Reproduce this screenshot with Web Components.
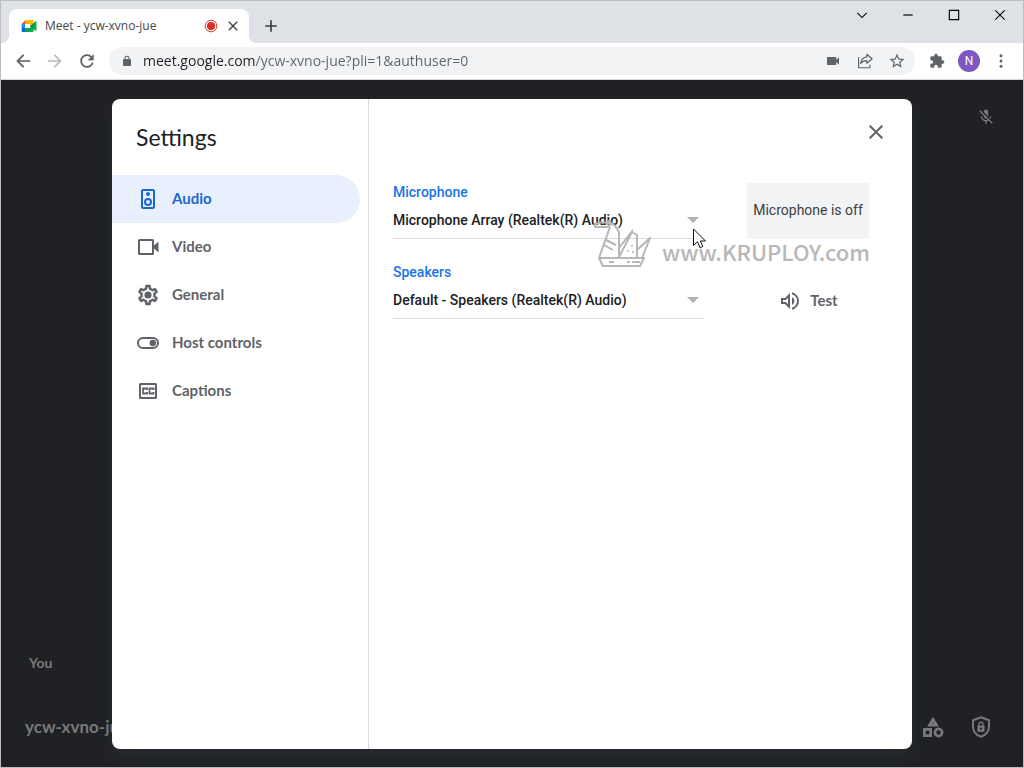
<!DOCTYPE html>
<html lang="en">
<head>
<meta charset="utf-8">
<title>Meet - ycw-xvno-jue</title>
<style>
    html, body {
        height: 100%;
        margin: 0;
    }
    body {
        font-family: Roboto, "Liberation Sans", sans-serif;
        font-size: 14px;
        color: #202124;
        --ui-font: "Open Sans", "Noto Sans", sans-serif;
        --brand-font: Lato, "Liberation Sans", sans-serif;
        --gray-700: #5f6368;
        --blue-600: #1a73e8;
        --stage: #202124;
    }
</style>
</head>
<body>
<browser-window>
    <browser-tab slot="tabs">Meet - ycw-xvno-jue</browser-tab>
    <browser-toolbar slot="toolbar" url="meet.google.com/ycw-xvno-jue?pli=1&amp;authuser=0"></browser-toolbar>
    <meet-stage name="You" code="ycw-xvno-jue">
        <settings-dialog heading="Settings">
            <settings-item slot="nav" icon="speaker" selected>Audio</settings-item>
            <settings-item slot="nav" icon="video">Video</settings-item>
            <settings-item slot="nav" icon="gear">General</settings-item>
            <settings-item slot="nav" icon="toggle">Host controls</settings-item>
            <settings-item slot="nav" icon="captions">Captions</settings-item>

            <device-row label="Microphone" value="Microphone Array (Realtek(R) Audio)">
                <mic-status>Microphone is off</mic-status>
            </device-row>
            <device-row label="Speakers" value="Default - Speakers (Realtek(R) Audio)">
                <test-button>Test</test-button>
            </device-row>
        </settings-dialog>
    </meet-stage>
</browser-window>
<site-watermark>www.KRUPLOY.com</site-watermark>
<mouse-pointer></mouse-pointer>

<script>
    // Icons are drawn on a 24 unit grid and filled with the current colour
    const ICONS = {
        back: '<path d="M20.500 11H7.800l5.600-5.600L12 4l-8 8 8 8 1.400-1.400L7.800 13h12.700z" stroke="currentColor" stroke-width=".2"/>',
        forward: '<path d="M3.500 11h12.700l-5.600-5.600L12 4l8 8-8 8-1.400-1.400 5.600-5.600H3.500z" stroke="currentColor" stroke-width=".2"/>',
        reload: '<path d="M17.650 6.350C16.200 4.900 14.210 4 12 4c-4.420 0-7.990 3.580-7.990 8s3.570 8 7.990 8c3.730 0 6.840-2.550 7.730-6h-2.080c-.82 2.330-3.040 4-5.650 4-3.310 0-6-2.690-6-6s2.690-6 6-6c1.660 0 3.140.69 4.220 1.780L13 11h7V4l-2.350 2.350z" stroke="currentColor" stroke-width=".2"/>',
        lock: '<path d="M18 8h-1V6.500a5 5 0 0 0-10 0V8H6a2 2 0 0 0-2 2v10a2 2 0 0 0 2 2h12a2 2 0 0 0 2-2V10a2 2 0 0 0-2-2zM9 8V6.500a3 3 0 0 1 6 0V8z"/>',
        camera: '<path d="M17 10.500V7a1 1 0 0 0-1-1H4a1 1 0 0 0-1 1v10a1 1 0 0 0 1 1h12a1 1 0 0 0 1-1v-3.500l4 4v-11z"/>',
        share: '<g fill="none" stroke="currentColor" stroke-width="1.600"><path d="M3.500 7v14h15v-4" stroke-linejoin="round"/><path d="M14.500 3l7 6-7 6v-3.500c-3.700 0-6.300 1-8.300 3.700.7-4.700 3.500-8.200 8.300-8.700z" stroke-linejoin="round"/></g>',
        star: '<path d="M22 9.240l-7.190-.62L12 2 9.190 8.630 2 9.240l5.460 4.730L5.820 21 12 17.270 18.180 21l-1.630-7.030L22 9.240zM12 15.400l-3.760 2.270 1-4.280-3.320-2.880 4.380-.38L12 6.100l1.710 4.040 4.380.38-3.320 2.880 1 4.280L12 15.400z"/>',
        puzzle: '<path d="M20.500 11H19V7c0-1.100-.9-2-2-2h-4V3.500C13 2.120 11.880 1 10.500 1S8 2.120 8 3.500V5H4c-1.100 0-1.990.9-1.990 2v3.800H3.500c1.490 0 2.700 1.210 2.700 2.700s-1.210 2.700-2.700 2.700H2V20c0 1.100.9 2 2 2h3.800v-1.500c0-1.490 1.210-2.700 2.700-2.700 1.490 0 2.700 1.210 2.700 2.700V22H17c1.100 0 2-.9 2-2v-4h1.500c1.380 0 2.500-1.120 2.500-2.500S21.880 11 20.500 11z"/>',
        dots: '<circle cx="12" cy="5" r="2"/><circle cx="12" cy="12" r="2"/><circle cx="12" cy="19" r="2"/>',
        cross: '<path d="M19 6.410L17.590 5 12 10.590 6.410 5 5 6.410 10.590 12 5 17.590 6.410 19 12 13.410 17.590 19 19 17.590 13.410 12z"/>',
        plus: '<path d="M19 11h-6V5h-2v6H5v2h6v6h2v-6h6z"/>',
        record: '<circle cx="12" cy="12" r="7"/><circle cx="12" cy="12" r="10" fill="none" stroke="currentColor" stroke-width="1.600"/>',
        meet: '<path fill="#ea4335" d="M1 9l6-6v6z"/><path fill="#2684fc" d="M1 9h5v6H1z"/><path fill="#0066da" d="M1 15h5v6H3a2 2 0 0 1-2-2z"/><path fill="#ffba00" d="M7 3h10a2 2 0 0 1 2 2v5l-5 3V9H6z"/><path fill="#00ac47" d="M6 15h8v-3l5-4v11a2 2 0 0 1-2 2H6z"/><path fill="#00832d" d="M14 12l5-4v8z"/><path fill="#00ac47" d="M18 8.500l4-3.500c.5-.4 1.200-.1 1.200.6v13c0 .7-.7 1-1.200.6l-4-3.500z"/>',
        chevron: '<path d="M4 8.500l8 8 8-8" fill="none" stroke="currentColor" stroke-width="1.800"/>',
        minimise: '<path d="M4 11h16v2H4z"/>',
        maximise: '<path d="M5 5h14v14H5z" fill="none" stroke="currentColor" stroke-width="1.700"/>',
        shut: '<path d="M4 4l16 16M20 4L4 20" fill="none" stroke="currentColor" stroke-width="1.800"/>',
        speaker: '<path fill-rule="evenodd" d="M17 2H7a2 2 0 0 0-2 2v16a2 2 0 0 0 2 2h10a2 2 0 0 0 2-2V4a2 2 0 0 0-2-2zm0 18H7V4h10z"/><circle cx="12" cy="7" r="2"/><circle cx="12" cy="15" r="3" fill="none" stroke="currentColor" stroke-width="2"/>',
        video: '<path fill-rule="evenodd" d="M18 10.500V5.500A1.500 1.500 0 0 0 16.500 4h-13A1.500 1.500 0 0 0 2 5.500v13A1.500 1.500 0 0 0 3.500 20h13a1.500 1.500 0 0 0 1.500-1.500v-5l4.500 4v-11zM16 18H4V6h12z"/>',
        gear: '<path stroke="currentColor" stroke-width=".5" d="M19.430 12.980c.04-.32.07-.64.07-.98 0-.34-.03-.66-.07-.98l2.110-1.650c.19-.15.24-.42.12-.64l-2-3.460c-.09-.16-.26-.25-.44-.25-.06 0-.12.01-.17.03l-2.490 1c-.52-.4-1.080-.73-1.690-.98l-.38-2.650C14.460 2.180 14.250 2 14 2h-4c-.25 0-.46.18-.49.42l-.38 2.650c-.61.25-1.170.59-1.690.98l-2.490-1c-.06-.02-.12-.03-.18-.03-.17 0-.34.09-.43.25l-2 3.460c-.13.22-.07.49.12.64l2.110 1.650c-.04.32-.07.65-.07.98 0 .33.03.66.07.98l-2.110 1.650c-.19.15-.24.42-.12.64l2 3.460c.09.16.26.25.44.25.06 0 .12-.01.17-.03l2.490-1c.52.4 1.080.73 1.690.98l.38 2.650c.03.24.24.42.49.42h4c.25 0 .46-.18.49-.42l.38-2.650c.61-.25 1.170-.59 1.690-.98l2.490 1c.06.02.12.03.18.03.17 0 .34-.09.43-.25l2-3.460c.12-.22.07-.49-.12-.64l-2.110-1.650zm-1.980-1.710c.04.31.05.52.05.73 0 .21-.02.43-.05.73l-.14 1.130.89.7 1.080.84-.7 1.210-1.270-.51-1.040-.42-.9.68c-.43.32-.84.56-1.250.73l-1.060.43-.16 1.130-.2 1.350h-1.400l-.19-1.350-.16-1.130-1.060-.43c-.43-.18-.83-.41-1.230-.71l-.91-.7-1.060.43-1.270.51-.7-1.210 1.080-.84.89-.7-.14-1.130c-.03-.31-.05-.54-.05-.74s.02-.43.05-.73l.14-1.130-.89-.7-1.080-.84.7-1.210 1.270.51 1.040.42.9-.68c.43-.32.84-.56 1.250-.73l1.060-.43.16-1.130.2-1.350h1.390l.19 1.350.16 1.130 1.060.43c.43.18.83.41 1.230.71l.91.7 1.060-.43 1.270-.51.7 1.210-1.070.85-.89.7.14 1.130z"/><circle cx="12" cy="12" r="3.600"/>',
        toggle: '<rect x="2" y="7" width="20" height="10" rx="5" fill="none" stroke="currentColor" stroke-width="2"/><circle cx="16.800" cy="12" r="3.200"/>',
        captions: '<path fill-rule="evenodd" d="M19.500 4h-15A1.500 1.500 0 0 0 3 5.500v13A1.500 1.500 0 0 0 4.500 20h15a1.500 1.500 0 0 0 1.500-1.500v-13A1.500 1.500 0 0 0 19.500 4zm-.5 14H5V6h14z"/><path d="M11 11V9.500H7v5h4V13M17.500 11V9.500h-4v5h4V13" fill="none" stroke="currentColor" stroke-width="1.800"/>',
        volume: '<path fill-rule="evenodd" d="M3 9v6h4l5 5V4L7 9zm7-.2v6.400L7.830 13H5v-2h2.830zM14 3.230v2.060a7 7 0 0 1 0 13.420v2.060A9 9 0 0 0 14 3.230zM14 7.970v8.060a4.500 4.500 0 0 0 0-8.060z"/>',
        micOff: '<path d="M19 11h-1.700c0 .74-.16 1.430-.43 2.050l1.230 1.230c.56-.98.9-2.090.9-3.280zm-4.020.17c0-.06.02-.11.02-.17V5c0-1.660-1.340-3-3-3S9 3.340 9 5v.18l5.980 5.990zM4.270 3L3 4.270l6.010 6.010V11c0 1.660 1.330 3 2.990 3 .22 0 .44-.03.65-.08l1.660 1.660c-.71.33-1.500.52-2.310.52-2.760 0-5.300-2.100-5.300-5.100H5c0 3.410 2.720 6.230 6 6.720V21h2v-3.280c.91-.13 1.770-.45 2.540-.9L19.730 21 21 19.730 4.270 3z"/>',
        shapes: '<g fill="none" stroke="currentColor" stroke-width="2.800"><path d="M12 4.500L8.600 10h6.800z"/><path d="M3.400 14.400h6.200v6.200H3.400z"/><circle cx="17.500" cy="17.500" r="3.600"/></g>',
        shield: '<path d="M12 2.200l8 3v6.300c0 4.700-3.200 8.700-8 10.300-4.800-1.600-8-5.600-8-10.300V5.200z" fill="none" stroke="currentColor" stroke-width="2"/><path fill-rule="evenodd" d="M15.500 10.500h-.8V9.300a2.700 2.700 0 0 0-5.400 0v1.200h-.8v6.300h7zm-4.900 0V9.300a1.400 1.400 0 0 1 2.800 0v1.200zm1.400 4.300a1.100 1.100 0 1 1 0-2.200 1.100 1.100 0 0 1 0 2.200z"/>'
    };

    class UiIcon extends HTMLElement {
        connectedCallback() {
            this.attachShadow({ mode: 'open' });
            const size = this.getAttribute('size') || 24;
            this.shadowRoot.innerHTML = `
                <style>
                    :host { display: block; flex: none; }
                    svg { display: block; fill: currentColor; }
                </style>
                <svg width="${size}" height="${size}" viewBox="0 0 24 24" aria-hidden="true">${ICONS[this.getAttribute('name')]}</svg>
            `;
        }
    }

    class BrowserWindow extends HTMLElement {
        connectedCallback() {
            this.attachShadow({ mode: 'open' });
            this.shadowRoot.innerHTML = `
                <style>
                    :host {
                        display: flex;
                        flex-direction: column;
                        box-sizing: border-box;
                        height: 100vh;
                        border: 1px solid #bdbdbf;
                    }
                    header {
                        display: flex;
                        align-items: flex-end;
                        height: 42px;
                        padding-left: 8px;
                        background: #dee1e6;
                    }
                    button {
                        display: flex;
                        align-items: center;
                        justify-content: center;
                        padding: 0;
                        border: 0;
                        background: none;
                        color: #202124;
                    }
                    .new-tab { width: 28px; height: 34px; margin-left: 8px; color: #3c4043; }
                    .controls { display: flex; align-self: flex-start; margin-left: auto; }
                    .controls button { width: 46px; height: 28px; color: #000; }
                    main { display: flex; flex: 1; min-height: 0; }
                    ::slotted(meet-stage) { flex: 1; }
                </style>
                <header>
                    <slot name="tabs"></slot>
                    <button class="new-tab" aria-label="New tab"><ui-icon name="plus" size="20"></ui-icon></button>
                    <div class="controls">
                        <button aria-label="Search tabs"><ui-icon name="chevron" size="14"></ui-icon></button>
                        <button aria-label="Minimise"><ui-icon name="minimise" size="14"></ui-icon></button>
                        <button aria-label="Maximise"><ui-icon name="maximise" size="16"></ui-icon></button>
                        <button aria-label="Close"><ui-icon name="shut" size="14"></ui-icon></button>
                    </div>
                </header>
                <slot name="toolbar"></slot>
                <main><slot></slot></main>
            `;
        }
    }

    class BrowserTab extends HTMLElement {
        connectedCallback() {
            this.attachShadow({ mode: 'open' });
            this.shadowRoot.innerHTML = `
                <style>
                    :host {
                        position: relative;
                        display: flex;
                        align-items: center;
                        box-sizing: border-box;
                        width: 240px;
                        height: 34px;
                        padding: 0 8px 0 12px;
                        border-radius: 8px 8px 0 0;
                        background: #fff;
                        font: 12px/16px var(--ui-font);
                        color: #45474a;
                    }
                    /* feet that curve into the toolbar */
                    :host::before, :host::after {
                        content: "";
                        position: absolute;
                        bottom: 0;
                        width: 8px;
                        height: 8px;
                    }
                    :host::before { right: 100%; background: radial-gradient(circle at 0 0, transparent 8px, #fff 8px); }
                    :host::after { left: 100%; background: radial-gradient(circle at 100% 0, transparent 8px, #fff 8px); }
                    .title { flex: 1; margin-left: 8px; }
                    .record { color: #d93025; }
                    button {
                        display: flex;
                        margin-left: 7px;
                        padding: 0;
                        border: 0;
                        background: none;
                        color: #3c4043;
                    }
                </style>
                <ui-icon name="meet" size="16"></ui-icon>
                <span class="title"><slot></slot></span>
                <ui-icon class="record" name="record" size="14"></ui-icon>
                <button aria-label="Close tab"><ui-icon name="cross" size="16"></ui-icon></button>
            `;
        }
    }

    class BrowserToolbar extends HTMLElement {
        connectedCallback() {
            this.attachShadow({ mode: 'open' });
            this.shadowRoot.innerHTML = `
                <style>
                    :host {
                        display: flex;
                        align-items: center;
                        height: 36px;
                        padding: 0 6px;
                        background: #fff;
                        border-bottom: 1px solid #d5d7da;
                    }
                    button {
                        display: flex;
                        flex: none;
                        align-items: center;
                        justify-content: center;
                        width: 32px;
                        height: 28px;
                        padding: 0;
                        border: 0;
                        background: none;
                        color: var(--gray-700);
                    }
                    button:disabled { color: #bbbdc0; }
                    .address {
                        display: flex;
                        flex: 1;
                        align-items: center;
                        height: 28px;
                        margin: 0 6px;
                        padding: 0 2px;
                        border-radius: 14px;
                        background: #f1f3f4;
                    }
                    /* the host name is darker than the path after it */
                    input {
                        flex: 1;
                        min-width: 0;
                        padding: 0;
                        border: 0;
                        outline: 0;
                        font: 14px/20px var(--ui-font);
                        color: #3c4043;
                        background: linear-gradient(90deg, #202124 112px, #5f6368 112px);
                        -webkit-background-clip: text;
                        background-clip: text;
                        -webkit-text-fill-color: transparent;
                    }
                    .avatar {
                        display: flex;
                        align-items: center;
                        justify-content: center;
                        width: 22px;
                        height: 22px;
                        border-radius: 50%;
                        background: #7e57c2;
                        color: #fff;
                        font: 12px/16px Roboto, sans-serif;
                    }
                </style>
                <button aria-label="Back"><ui-icon name="back" size="20"></ui-icon></button>
                <button aria-label="Forward" disabled><ui-icon name="forward" size="20"></ui-icon></button>
                <button aria-label="Reload"><ui-icon name="reload" size="20"></ui-icon></button>
                <div class="address">
                    <button aria-label="Site information"><ui-icon name="lock" size="12"></ui-icon></button>
                    <input type="text" aria-label="Address" spellcheck="false">
                    <button aria-label="Camera access"><ui-icon name="camera" size="16"></ui-icon></button>
                    <button aria-label="Share"><ui-icon name="share" size="18"></ui-icon></button>
                    <button aria-label="Bookmark"><ui-icon name="star" size="18"></ui-icon></button>
                </div>
                <button aria-label="Extensions"><ui-icon name="puzzle" size="16"></ui-icon></button>
                <button aria-label="Profile"><span class="avatar">N</span></button>
                <button aria-label="Menu"><ui-icon name="dots" size="18"></ui-icon></button>
            `;
            this.shadowRoot.querySelector('input').value = this.getAttribute('url');
        }
    }

    class MeetStage extends HTMLElement {
        connectedCallback() {
            this.attachShadow({ mode: 'open' });
            this.shadowRoot.innerHTML = `
                <style>
                    :host {
                        position: relative;
                        display: flex;
                        flex-direction: column;
                        background: var(--stage);
                        color: #78797b;
                        font-family: var(--brand-font);
                    }
                    .tile {
                        display: flex;
                        flex: 1;
                        flex-direction: column;
                        justify-content: space-between;
                        padding: 28px;
                        padding-bottom: 14px;
                    }
                    .tile ui-icon { align-self: flex-end; }
                    .name { font-size: 14px; font-weight: 700; line-height: 20px; }
                    footer {
                        display: flex;
                        align-items: center;
                        height: 80px;
                        padding: 0 18px 0 24px;
                    }
                    .code { flex: 1; font-size: 17px; font-weight: 700; line-height: 24px; }
                    button {
                        display: flex;
                        align-items: center;
                        justify-content: center;
                        width: 48px;
                        height: 48px;
                        padding: 0;
                        border: 0;
                        background: none;
                        color: inherit;
                    }
                    .overlay {
                        position: absolute;
                        inset: 0;
                        display: flex;
                        justify-content: center;
                        padding: 19px 0 18px;
                    }
                </style>
                <div class="tile">
                    <ui-icon name="micOff" size="18"></ui-icon>
                    <span class="name">${this.getAttribute('name')}</span>
                </div>
                <footer>
                    <span class="code">${this.getAttribute('code')}</span>
                    <button aria-label="Activities"><ui-icon name="shapes"></ui-icon></button>
                    <button aria-label="Host controls"><ui-icon name="shield"></ui-icon></button>
                </footer>
                <div class="overlay"><slot></slot></div>
            `;
        }
    }

    class SettingsDialog extends HTMLElement {
        connectedCallback() {
            this.attachShadow({ mode: 'open' });
            this.shadowRoot.innerHTML = `
                <style>
                    :host {
                        display: flex;
                        width: 100%;
                        max-width: 800px;
                        border-radius: 8px;
                        background: #fff;
                        color: #202124;
                        box-shadow: 0 8px 16px rgba(50, 64, 68, 0.35);
                    }
                    nav {
                        flex: none;
                        box-sizing: border-box;
                        width: 257px;
                        border-right: 1px solid #dadce0;
                    }
                    h2 {
                        margin: 0;
                        padding: 24px;
                        font-size: 23px;
                        font-weight: 400;
                        line-height: 28px;
                    }
                    section {
                        display: flex;
                        flex: 1;
                        flex-direction: column;
                        gap: 24px;
                        padding: 12px 43px 24px 24px;
                        font-family: Roboto, sans-serif;
                    }
                    .bar { display: flex; justify-content: flex-end; margin-right: -28px; }
                    button {
                        display: flex;
                        align-items: center;
                        justify-content: center;
                        width: 42px;
                        height: 42px;
                        margin-bottom: 6px;
                        padding: 0;
                        border: 0;
                        background: none;
                        color: var(--gray-700);
                    }
                </style>
                <nav>
                    <h2>${this.getAttribute('heading')}</h2>
                    <slot name="nav"></slot>
                </nav>
                <section>
                    <div class="bar"><button aria-label="Close dialog"><ui-icon name="cross"></ui-icon></button></div>
                    <slot></slot>
                </section>
            `;
        }
    }

    class SettingsItem extends HTMLElement {
        connectedCallback() {
            this.attachShadow({ mode: 'open' });
            this.shadowRoot.innerHTML = `
                <style>
                    :host { display: block; padding-right: 8px; }
                    button {
                        display: flex;
                        align-items: center;
                        gap: 12px;
                        width: 100%;
                        height: 48px;
                        padding: 0 24px;
                        border: 0;
                        border-radius: 0 24px 24px 0;
                        background: none;
                        color: var(--gray-700);
                        font: 700 15px/20px var(--brand-font);
                        text-align: left;
                    }
                    span { padding-bottom: 2px; }
                    :host([selected]) button { background: #e8f0fe; color: #1967d2; }
                </style>
                <button><ui-icon name="${this.getAttribute('icon')}"></ui-icon><span><slot></slot></span></button>
            `;
        }
    }

    class DeviceRow extends HTMLElement {
        connectedCallback() {
            this.attachShadow({ mode: 'open' });
            const value = this.getAttribute('value');
            this.shadowRoot.innerHTML = `
                <style>
                    :host { display: flex; gap: 43px; }
                    .field { display: flex; flex: 1; flex-direction: column; min-width: 0; }
                    label { color: var(--blue-600); font-size: 14px; font-weight: 500; line-height: 18px; }
                    .box {
                        display: flex;
                        align-items: center;
                        height: 37px;
                        border-bottom: 1px solid #dcdcdc;
                    }
                    select {
                        flex: 1;
                        min-width: 0;
                        height: 36px;
                        padding: 0;
                        border: 0;
                        outline: 0;
                        appearance: none;
                        background: none;
                        color: #202124;
                        font: 500 14px/20px Roboto, sans-serif;
                    }
                    .box::after {
                        content: "";
                        margin-right: 5px;
                        border: 6px solid transparent;
                        border-top-color: #b0b0b0;
                        border-bottom: 0;
                    }
                    .aside { display: flex; width: 122px; }
                    ::slotted(*) { flex: 1; }
                </style>
                <div class="field">
                    <label for="device">${this.getAttribute('label')}</label>
                    <div class="box"><select id="device"><option>${value}</option></select></div>
                </div>
                <div class="aside"><slot></slot></div>
            `;
        }
    }

    class MicStatus extends HTMLElement {
        connectedCallback() {
            this.attachShadow({ mode: 'open' });
            this.shadowRoot.innerHTML = `
                <style>
                    :host {
                        display: flex;
                        align-items: center;
                        justify-content: center;
                        background: #f1f3f4;
                        color: #3c4043;
                        font-size: 14px;
                        line-height: 20px;
                        white-space: nowrap;
                    }
                    span { padding-bottom: 2px; }
                </style>
                <span><slot></slot></span>
            `;
        }
    }

    class TestButton extends HTMLElement {
        connectedCallback() {
            this.attachShadow({ mode: 'open' });
            this.shadowRoot.innerHTML = `
                <style>
                    :host { display: flex; align-items: flex-end; justify-content: center; }
                    button {
                        display: flex;
                        align-items: center;
                        gap: 8px;
                        height: 36px;
                        padding: 0;
                        border: 0;
                        background: none;
                        color: var(--gray-700);
                        font: 700 15px/20px var(--brand-font);
                    }
                    span { padding-bottom: 2px; }
                </style>
                <button><ui-icon name="volume"></ui-icon><span><slot></slot></span></button>
            `;
        }
    }

    // Swan boat logo and address laid over the page
    class SiteWatermark extends HTMLElement {
        connectedCallback() {
            this.attachShadow({ mode: 'open' });
            this.shadowRoot.innerHTML = `
                <style>
                    :host {
                        position: absolute;
                        left: 592px;
                        top: 215px;
                        display: flex;
                        align-items: center;
                        gap: 10px;
                        color: #b7b7b7;
                        font: 500 22px/36px "Noto Sans CJK SC", "Noto Sans", sans-serif;
                        pointer-events: none;
                    }
                    svg { fill: none; stroke: currentColor; stroke-width: 2; stroke-linejoin: round; }
                    span { padding-top: 18px; }
                </style>
                <svg width="60" height="54" viewBox="0 0 60 54" aria-hidden="true">
                    <path d="M3 12h13l3-3-8-2-8 2zM14 8l3-2 6 5 4 6v26"/>
                    <path d="M18 12L7 43l4 8h37l4-8H7"/>
                    <path d="M14 25l10 5M12 30l9 5M27 42l13-25 5 3v23M27 33l14-18M45 35l13-12-8 20"/>
                    <path d="M17 47h5M35 47h3M40 47h8"/>
                    <g fill="currentColor" stroke="none"><circle cx="40" cy="31" r="1"/><circle cx="36" cy="36" r="1"/><circle cx="41" cy="37" r="1"/></g>
                </svg>
                <span><slot></slot></span>
            `;
        }
    }

    class MousePointer extends HTMLElement {
        connectedCallback() {
            this.attachShadow({ mode: 'open' });
            this.shadowRoot.innerHTML = `
                <style>
                    :host { position: absolute; left: 693px; top: 228px; pointer-events: none; }
                    svg { display: block; }
                </style>
                <svg width="14" height="22" viewBox="0 0 14 22" aria-hidden="true">
                    <path d="M.5 1v16.500l4-3.800 2.500 6 2.800-1.200-2.500-5.500h5.200z" fill="#fff" stroke="#111"/>
                </svg>
            `;
        }
    }

    customElements.define('ui-icon', UiIcon);
    customElements.define('browser-window', BrowserWindow);
    customElements.define('browser-tab', BrowserTab);
    customElements.define('browser-toolbar', BrowserToolbar);
    customElements.define('meet-stage', MeetStage);
    customElements.define('settings-dialog', SettingsDialog);
    customElements.define('settings-item', SettingsItem);
    customElements.define('device-row', DeviceRow);
    customElements.define('mic-status', MicStatus);
    customElements.define('test-button', TestButton);
    customElements.define('site-watermark', SiteWatermark);
    customElements.define('mouse-pointer', MousePointer);
</script>
</body>
</html>
